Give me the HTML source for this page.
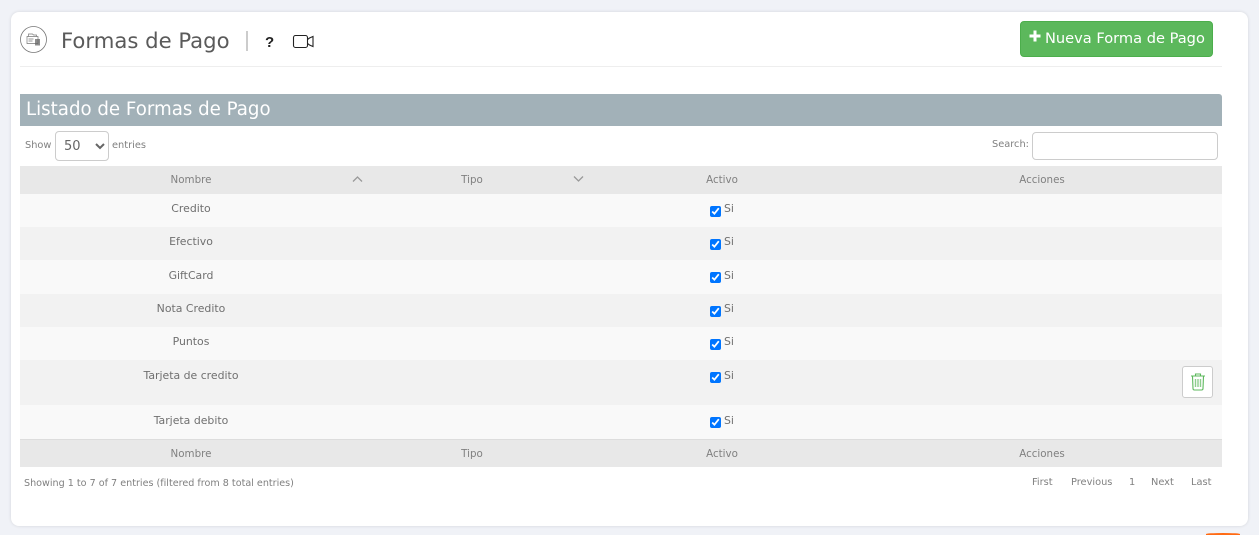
<!DOCTYPE html>
<html lang="es"><head><meta charset="utf-8"><title>Formas de Pago</title>
<style>
*{box-sizing:border-box}
html,body{margin:0;padding:0;width:1259px;height:535px;overflow:hidden;background:#f0f2f7}
#page{position:relative;width:1259px;height:535px;overflow:hidden;background:#f0f2f7;font-family:"DejaVu Sans","Liberation Sans",sans-serif;color:#777}
.a{position:absolute;white-space:nowrap;line-height:1}
#card{position:absolute;left:11px;top:12px;width:1237px;height:514px;background:#fff;border-radius:8px;box-shadow:0 0 3px rgba(0,0,0,.12)}
#orange{position:absolute;left:1206px;top:533px;width:34px;height:2px;border-radius:50% 50% 0 0;background:#ff6a13}
#btn{position:absolute;left:1020px;top:21px;width:193px;height:36px;background:#5cb85c;border:1px solid #4cae4c;border-radius:4px}
#bar{position:absolute;left:20px;top:94px;width:1202px;height:32px;background:#a2b1b8;border-top-right-radius:3px}
#hr{position:absolute;left:20px;top:66px;width:1202px;height:1px;background:#eee}
select{position:absolute;left:55px;top:131px;width:54px;height:30px;border:1px solid #ccc;border-radius:4px;background:#fff;color:#666;font:13px "DejaVu Sans",sans-serif;padding-left:4px}
#search{position:absolute;left:1032px;top:132px;width:186px;height:28px;border:1px solid #ccc;border-radius:4px;background:#fff}
table{position:absolute;left:20px;top:166px;width:1202px;border-collapse:collapse;table-layout:fixed;font-size:10.9px}
th{font-weight:400;height:28px;background:#e8e8e8;color:#808080;padding:0;text-align:center;font-size:10.3px;vertical-align:middle}
td{padding:9px 0 0;text-align:center;vertical-align:top;color:#707070;position:relative}
tr.u td{padding-top:8px}
tbody tr:nth-child(odd) td{background:#f9f9f9}
tbody tr:nth-child(even) td{background:#f2f2f2}
tfoot th{border-top:1px solid #ddd;padding-top:2px}
td input{position:absolute;left:128px;top:12px;margin:0;width:11px;height:11px}
td .si{position:absolute;left:142px;top:9px}
tr.u td .si{top:8px}
.sm{font-size:9.8px;color:#808080}
</style></head><body>
<div id="page">
<div id="card"></div>
<div id="orange"></div>

<svg class="a" style="left:20px;top:26px" width="28" height="28" viewBox="0 0 28 28" fill="none" stroke="#777">
<circle cx="13.5" cy="13.5" r="13" stroke-width=".8"/>
<path d="M7 10.500h11v7h-11z M8.500 10.500v-2.500h4l1 1h3v1.500 M8.500 13h5 M8.500 15h4" stroke-width=".7"/>
<path d="M15 13h5v6.500h-5z" fill="#666" stroke="none" opacity=".75"/>
</svg>
<div class="a" style="left:61px;top:30px;font-size:21.200px;color:#5a5a5a">Formas de Pago</div>
<div class="a" style="left:246px;top:31px;width:2px;height:20px;background:#ccc"></div>
<div class="a" style="left:265px;top:34px;font:700 15px 'Liberation Sans',sans-serif;color:#222">?</div>
<svg class="a" style="left:292px;top:34px" width="23" height="15" viewBox="0 0 23 15" fill="none" stroke="#222" stroke-width="1.100">
<rect x="1.500" y="1.500" width="14" height="12" rx="2"/>
<path d="M15.500 5.500l2-1.500 3.500-1.500v10l-3.500-1.500-2-1.500"/>
</svg>

<div id="btn"></div>
<svg class="a" style="left:1029px;top:30px" width="12" height="12" viewBox="0 0 12 12"><path d="M4.500 0.500h3v4h4v3h-4v4h-3v-4h-4v-3h4z" fill="#fff"/></svg>
<div class="a" style="left:1045px;top:32px;font-size:14.600px;color:#fff">Nueva Forma de Pago</div>

<div id="hr"></div>
<div id="bar"></div>
<div class="a" style="left:26px;top:101px;font-size:18.200px;color:#fff">Listado de Formas de Pago</div>

<div class="a sm" style="left:25px;top:141px">Show</div>
<select><option>50</option></select>
<div class="a sm" style="left:112px;top:141px">entries</div>
<div class="a sm" style="left:992px;top:140px">Search:</div>
<input id="search" type="text">

<table>
<colgroup><col style="width:342px"><col style="width:220px"><col style="width:280px"><col style="width:360px"></colgroup>
<thead><tr><th>Nombre</th><th>Tipo</th><th>Activo</th><th>Acciones</th></tr></thead>
<tbody>
<tr class="u" style="height:33px"><td>Credito</td><td></td><td><input type="checkbox" checked><span class="si">Si</span></td><td></td></tr>
<tr class="u" style="height:33px"><td>Efectivo</td><td></td><td><input type="checkbox" checked><span class="si">Si</span></td><td></td></tr>
<tr style="height:34px"><td>GiftCard</td><td></td><td><input type="checkbox" checked><span class="si">Si</span></td><td></td></tr>
<tr class="u" style="height:33px"><td>Nota Credito</td><td></td><td><input type="checkbox" checked><span class="si">Si</span></td><td></td></tr>
<tr class="u" style="height:33px"><td>Puntos</td><td></td><td><input type="checkbox" checked><span class="si">Si</span></td><td></td></tr>
<tr style="height:45px"><td>Tarjeta de credito</td><td></td><td><input type="checkbox" checked><span class="si">Si</span></td><td></td></tr>
<tr style="height:34px"><td>Tarjeta debito</td><td></td><td><input type="checkbox" checked><span class="si">Si</span></td><td></td></tr>
</tbody>
<tfoot><tr><th>Nombre</th><th>Tipo</th><th>Activo</th><th>Acciones</th></tr></tfoot>
</table>

<svg class="a" style="left:351px;top:175px" width="13" height="8" viewBox="0 0 13 8" fill="none" stroke="#999" stroke-width="1.300"><path d="M2 6.500l4.500-4.500 4.500 4.500"/></svg>
<svg class="a" style="left:572px;top:175px" width="13" height="8" viewBox="0 0 13 8" fill="none" stroke="#999" stroke-width="1.300"><path d="M2 1.500l4.500 4.500 4.500-4.500"/></svg>

<div class="a" style="left:1182px;top:366px;width:31px;height:32px;background:#fff;border:1px solid #ccc;border-radius:3px"></div>
<svg class="a" style="left:1190px;top:373px" width="16" height="18" viewBox="0 0 16 18" fill="none" stroke="#5cb85c" stroke-width="1.100">
<path d="M1 3h14M5.500 3V1h5v2M2.500 3l.5 12.500q0 1.500 1.500 1.500h7q1.500 0 1.500-1.500L13.500 3"/>
<path d="M5.500 6v8M8 6v8M10.500 6v8" stroke-width="1.400" opacity=".7"/>
</svg>

<div class="a" style="left:24px;top:479px;font-size:9.600px;color:#808080">Showing 1 to 7 of 7 entries (filtered from 8 total entries)</div>
<div class="a sm" style="left:1032px;top:478px">First</div>
<div class="a sm" style="left:1071px;top:478px">Previous</div>
<div class="a sm" style="left:1129px;top:478px">1</div>
<div class="a sm" style="left:1151px;top:478px">Next</div>
<div class="a sm" style="left:1191px;top:478px">Last</div>
</div>
</body></html>
